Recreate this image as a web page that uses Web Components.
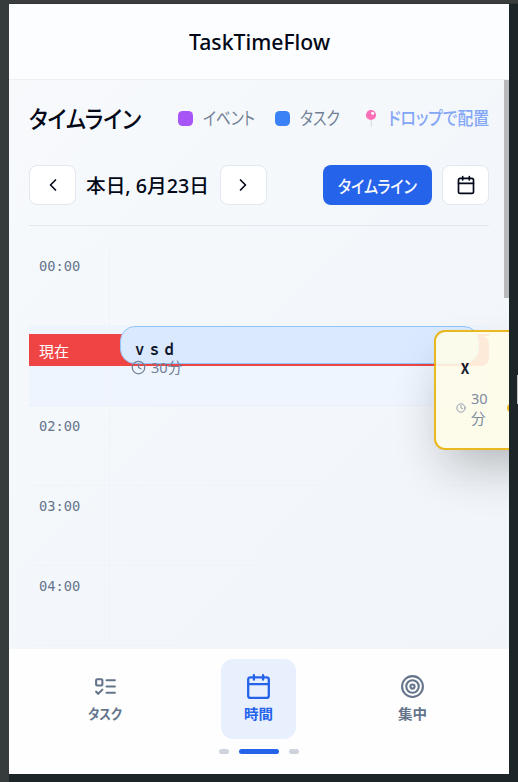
<!DOCTYPE html>
<html lang="ja">
<head>
<meta charset="utf-8">
<title>TaskTimeFlow</title>
<style>
html,body{margin:0;height:100%;overflow:hidden}
body{font-family:"Noto Sans","Noto Sans CJK JP",sans-serif;color:#020817}
</style>
</head>
<body>
<app-window></app-window>
<script>
const define = (name, html, ready) => customElements.define(name, class extends HTMLElement {
  connectedCallback() {
    if (this.shadowRoot) return;
    this.attachShadow({mode: 'open'}).innerHTML = '<style>*{box-sizing:border-box}:host{box-sizing:border-box}</style>' + (typeof html === 'function' ? html(this) : html);
    if (ready) ready(this);
  }
});

// Line of text condensed to a given width.
define('fit-text', el => `<style>:host{display:block;flex:none;width:${el.getAttribute('w')}px;white-space:nowrap;line-height:1.2}
span{display:inline-block;transform-origin:0 50%;font-feature-settings:"palt"}</style><span>${el.getAttribute('text')}</span>`,
el => {
  const s = el.shadowRoot.querySelector('span');
  s.style.transform = `scaleX(${el.getAttribute('w') / s.getBoundingClientRect().width})`;
});

const icons = {
  left: '<path d="m15 18-6-6 6-6"/>',
  right: '<path d="m9 18 6-6-6-6"/>',
  calendar: '<path d="M8 2v4M16 2v4M3 10h18"/><rect x="3" y="4" width="18" height="18" rx="2"/>',
  clock: '<circle cx="12" cy="12" r="10"/><path d="M12 6v6l4 2"/>',
  target: '<circle cx="12" cy="12" r="10"/><circle cx="12" cy="12" r="6"/><circle cx="12" cy="12" r="2"/>',
  todo: '<rect x="3" y="5" width="6" height="6" rx="1"/><path d="m3 17 2 2 4-4M13 6h8M13 12h8M13 18h8"/>'
};
define('line-icon', el => `<style>:host{display:block;flex:none;width:${el.getAttribute('size')}px;height:${el.getAttribute('size')}px}svg{display:block;width:100%;height:100%}</style>
<svg viewBox="0 0 24 24" fill="none" stroke="currentColor" stroke-width="2" stroke-linecap="round" stroke-linejoin="round">${icons[el.getAttribute('name')]}</svg>`);

define('app-header', `<style>:host{display:flex;height:76px;flex:none;align-items:center;justify-content:center;background:#fcfdfe;border-bottom:1px solid #eceff3;font-size:22px;font-weight:500}</style>
<fit-text w="141" text="TaskTimeFlow"></fit-text>`);

define('timeline-legend', `<style>:host{display:flex;align-items:center;height:38px;margin-bottom:-2px;font-size:18px;color:#718096}
.title{font-size:24px;font-weight:500;color:#020817;margin-right:37px}
i{display:block;flex:none;width:15px;height:15px;border-radius:4.5px;margin:-2px 10px 0 0}
svg{display:block;flex:none;margin:-2px 10px 0 0}.drop{color:#84a6f6;font-weight:500}</style>
<fit-text class="title" w="112" text="タイムライン"></fit-text>
<i style="background:#a855f7"></i><fit-text w="52" text="イベント" style="margin-right:20px"></fit-text>
<i style="background:#3b82f6"></i><fit-text w="40" text="タスク" style="margin-right:24px"></fit-text>
<svg width="14" height="20" viewBox="0 0 14 20"><path d="M7.3 10v9" stroke="#d9dde3" stroke-width="1.2"/><circle cx="7" cy="7" r="5.1" fill="#fb6fb9"/><circle cx="8.7" cy="5.3" r="1.5" fill="#fff"/></svg>
<fit-text class="drop" w="101" text="ドロップで配置"></fit-text>`);

define('icon-button', `<style>:host{display:flex;align-items:center;justify-content:center;flex:none;width:47px;height:40px;border:1px solid #e2e8f0;border-radius:8px;background:#fff}</style><slot></slot>`);

define('date-toolbar', `<style>:host{display:flex;align-items:center;height:40px}
.date{font-size:19px;font-weight:500;margin:2px 11px 0 10px}
.mode{display:flex;align-items:center;justify-content:center;width:109px;height:40px;padding-top:2px;border-radius:8px;background:#2563eb;color:#f8fafc;font-size:17.5px;font-weight:500;margin:0 10px 0 auto}</style>
<icon-button><line-icon name="left" size="20"></line-icon></icon-button>
<fit-text class="date" w="123" text="本日, 6月23日"></fit-text>
<icon-button><line-icon name="right" size="20" style="margin-right:2px"></line-icon></icon-button>
<div class="mode"><fit-text w="79" text="タイムライン"></fit-text></div>
<icon-button><line-icon name="calendar" size="20"></line-icon></icon-button>`);

define('hour-row', el => `<style>:host{display:flex;height:80px;flex:none;border-bottom:1px solid #eff4f8}
:host([now]){background:#eef5ff;border-color:#e8f0fa}
.t{width:81px;height:100%;padding:12px 0 0 10px;border-right:1px solid #eff4f8;font:13.7px/17px "DejaVu Sans Mono",monospace;color:#64748b}</style><div class="t">${el.getAttribute('time') || ''}</div>`);

define('now-bar', `<style>:host{display:block;height:32px;padding-top:2px;color:#fff;font-size:15px;background:linear-gradient(#ef4444,#ef4444) 0 0/100% 2px no-repeat}
div{height:30px;padding:0 10px;line-height:31px;background:#ef4444;border-radius:0 8px 8px 0}</style><div>現在</div>`);

define('event-card', `<style>:host{display:block;height:38px;border:1px solid #93c5fd;border-radius:15px;background:#dbe9fe;padding:11px 11px 0 10px}
.n{width:max-content;font:700 14px/20px "Noto Sans CJK JP",sans-serif;letter-spacing:1.6px;padding-left:2px;color:#0f172a;transform:scale(.95,1.15);transform-origin:0 60%}
.d{display:flex;align-items:center;gap:5px;margin-top:-1px;font-size:14.6px;line-height:20px;color:#718096}</style>
<div class="n">ｖｓｄ</div><div class="d"><line-icon name="clock" size="15"></line-icon><span>30分</span></div>`);

define('drag-card', `<style>:host{display:block;width:176px;height:120px;border:2px solid #eab308;border-radius:11px;background:#fffdea;opacity:.9;padding:25px 20px 0;box-shadow:0 25px 50px -12px rgba(0,0,0,.3)}
.n{width:max-content;font:700 16px/22px "Noto Sans CJK JP",sans-serif;padding-left:1px;color:#020817;transform:translateY(-1px) scale(.88,1.2);transform-origin:60% 85%}
.d{display:flex;align-items:center;margin-top:9px;font-size:14.6px;line-height:20px;color:#718096}
.d span{width:18px;margin-left:5px}
.d i{width:10px;height:10px;border-radius:50%;background:#eab308;margin-left:18px}</style>
<div class="n">ｘ</div><div class="d"><line-icon name="clock" size="10"></line-icon><span>30分</span><i></i></div>`);

define('day-timeline', `<style>:host{display:flex;flex-direction:column;position:relative;margin-top:20px}
now-bar{position:absolute;left:0;right:0;top:88px}
event-card{position:absolute;left:91px;right:10px;top:80px}</style>
<hour-row time="00:00"></hour-row><hour-row now></hour-row><hour-row time="02:00"></hour-row><hour-row time="03:00"></hour-row><hour-row time="04:00"></hour-row><hour-row></hour-row>
<now-bar></now-bar><event-card></event-card>`);

define('nav-item', el => `<style>:host{display:flex;flex-direction:column;align-items:center;width:75px;height:80px;padding-top:14px;border-radius:12px;color:#64748b;font-size:14px;font-weight:600}
:host([active]){background:#e8effd;color:#2563eb}
line-icon{margin:1px}:host([active]) line-icon{transform:scale(1.1)}
fit-text{margin-top:6px}</style>
<line-icon name="${el.getAttribute('icon')}" size="25"></line-icon><fit-text w="${el.getAttribute('w')}" text="${el.getAttribute('label')}"></fit-text>`);

define('bottom-nav', `<style>:host{display:block;flex:none;height:125px;background:#fefefe;padding-top:10px;z-index:2}
nav{display:grid;grid-template-columns:repeat(3,153.5px);justify-items:center;justify-content:center;margin-left:-1px}
.dots{display:flex;justify-content:center;gap:10px;margin-top:10px}.dots i{width:10px;height:5px;border-radius:3px;background:#cdd2db}.dots .on{width:40px;background:#2563eb}</style>
<nav><nav-item icon="todo" label="タスク" w="34"></nav-item><nav-item active icon="calendar" label="時間" w="29"></nav-item><nav-item icon="target" label="集中" w="29"></nav-item></nav>
<div class="dots"><i></i><i class="on"></i><i></i></div>`);

define('app-window', `<style>
:host{display:block;position:relative;height:782px;width:518px;padding:4px 9px 8px;overflow:hidden;background:linear-gradient(90deg,#363c3b 9px,transparent 9px),linear-gradient(#393e3d 3px,#272d2d 4px,#1c2628 4px)}
.screen{position:relative;display:flex;flex-direction:column;width:500px;height:770px;overflow:hidden;background:linear-gradient(135deg,#f8fafc,#f3f7fb 50%,#f1f5fa)}
main{flex:1;min-height:0;overflow:hidden;padding:20px 20px 0;position:relative}
date-toolbar{margin-top:29px}
hr{border:0;border-top:1px solid #e2e8f0;margin:20px 0 0}
.thumb{position:absolute;right:0;top:0;width:5px;height:218px;background:#b8babc}
drag-card{position:absolute;left:425px;top:326px;z-index:1}
.edge{position:absolute;left:517px;top:375px;width:1px;height:29px;background:#bfc3c4}</style>
<div class="screen"><app-header></app-header><main><timeline-legend></timeline-legend><date-toolbar></date-toolbar><hr><day-timeline></day-timeline><div class="thumb"></div></main><drag-card></drag-card><bottom-nav></bottom-nav></div><div class="edge"></div>`);
</script>
</body>
</html>
